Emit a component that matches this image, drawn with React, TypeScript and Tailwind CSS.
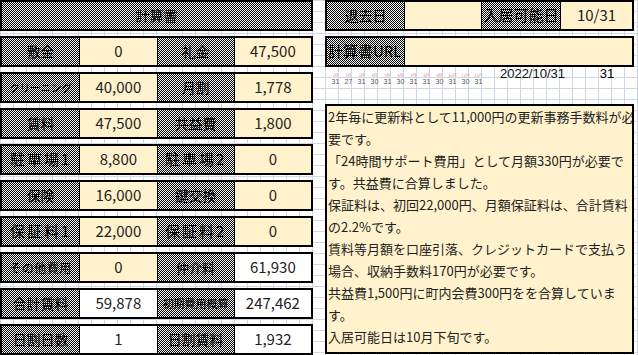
import React from 'react';

const HATCH =
  'bg-white bg-[image:repeating-conic-gradient(#000_0_25%,#fff_0_50%)] bg-[length:2px_2px]';
const CREAM = 'bg-[#fff2cc]';

type Cell = { label: string; lc?: string; value: string; white?: boolean };

const ROWS: [Cell, Cell][] = [
  [
    { label: '敷金', value: '0' },
    { label: '礼金', value: '47,500' },
  ],
  [
    { label: 'クリーニング', lc: 'text-[10.5px]', value: '40,000' },
    { label: '月割', value: '1,778' },
  ],
  [
    { label: '賃料', value: '47,500' },
    { label: '共益費', value: '1,800' },
  ],
  [
    { label: '駐車場1', lc: 'text-[15px] tracking-[2px]', value: '8,800' },
    { label: '駐車場2', lc: 'text-[15px] tracking-[2px]', value: '0' },
  ],
  [
    { label: '保険', value: '16,000' },
    { label: '鍵交換', value: '0' },
  ],
  [
    { label: '保証料1', lc: 'text-[15px] tracking-[2px]', value: '22,000' },
    { label: '保証料2', lc: 'text-[15px] tracking-[2px]', value: '0' },
  ],
  [
    { label: 'その他費用', lc: 'text-[12px] tracking-[0.5px]', value: '0' },
    { label: '仲介料', lc: 'text-[13px] text-[#1d3f9a]', value: '61,930', white: true },
  ],
  [
    { label: '合計賃料', value: '59,878', white: true },
    { label: '初期費用概算', lc: 'text-[11px]', value: '247,462', white: true },
  ],
  [
    { label: '日割日数', value: '1', white: true },
    { label: '日割賃料', value: '1,932', white: true },
  ],
];

const MONTHS = ['31', '27', '31', '30', '31', '30', '31', '31', '30', '31', '30', '31'];

const NOTES = [
  '2年毎に更新料として11,000円の更新事務手数料が必',
  '要です。',
  '「24時間サポート費用」として月額330円が必要で',
  'す。共益費に合算しました。',
  '保証料は、初回22,000円、月額保証料は、合計賃料',
  'の2.2%です。',
  '賃料等月額を口座引落、クレジットカードで支払う',
  '場合、収納手数料170円が必要です。',
  '共益費1,500円に町内会費300円をを合算していま',
  'す。',
  '入居可能日は10月下旬です。',
];

function Label({ text, cls = 'text-[14px]', first }: { text: string; cls?: string; first?: boolean }) {
  return (
    <div
      className={`${HATCH} flex items-center justify-center overflow-hidden whitespace-nowrap text-black ${
        first ? '' : 'border-l border-black'
      } ${cls}`}
    >
      {text}
    </div>
  );
}

function Value({ text, white }: { text: string; white?: boolean }) {
  return (
    <div
      className={`flex items-center justify-center border-l border-black text-[15px] text-[#222] ${
        white ? 'bg-white' : CREAM
      }`}
    >
      {text}
    </div>
  );
}

export default function App() {
  return (
    <div className="flex h-[355px] w-[638px] overflow-hidden bg-white bg-[image:linear-gradient(#d0d7e5_1px,transparent_1px),linear-gradient(90deg,#d0d7e5_1px,transparent_1px)] bg-[length:13px_11px] font-['Noto_Sans_CJK_JP',sans-serif]">
      {/* left: cost sheet */}
      <div className="flex w-[313px] flex-col gap-[5px]">
        <div className="flex h-[31px] border-2 border-black">
          <Label text="計算書" first cls="flex-1 text-[14px]" />
        </div>
        {ROWS.map(([a, b], i) => (
          <div key={i} className="grid h-[31px] grid-cols-4 border-2 border-black">
            <Label text={a.label} cls={a.lc} first />
            <Value text={a.value} white={a.white} />
            <Label text={b.label} cls={b.lc} />
            <Value text={b.value} white={b.white} />
          </div>
        ))}
      </div>

      {/* right: dates and notes */}
      <div className="ml-[12px] flex w-[309px] flex-col">
        <div className="grid h-[31px] grid-cols-[77px_77px_79px_1fr] border-2 border-black">
          <Label text="退去日" first />
          <div className={`border-l border-black ${CREAM}`} />
          <Label text="入居可能日" cls="text-[15px]" />
          <Value text="10/31" />
        </div>
        <div className="mt-[5px] grid h-[31px] grid-cols-[77px_1fr] border-2 border-black">
          <div className={`${HATCH} flex items-center whitespace-nowrap pl-[1px] text-[15px] text-black`}>
            計算書URL
          </div>
          <div className={`border-l border-black ${CREAM}`} />
        </div>
        <div className="flex h-[37px] items-start">
          <div className="ml-[4px] flex pt-[6px]">
            {MONTHS.map((d, i) => (
              <div key={i} className="flex w-[13px] flex-col items-center">
                <span className="text-[4px] leading-[5px] text-[#e08a8a]">{i + 1}月</span>
                <span className="font-['Liberation_Sans',sans-serif] text-[7px] leading-[7px] text-[#555]">
                  {d}
                </span>
              </div>
            ))}
          </div>
          <div className="w-[95px] text-center font-['Liberation_Sans',sans-serif] text-[13px] leading-[13px] text-[#111]">
            2022/10/31
          </div>
          <div className="flex-1 text-center font-['Liberation_Sans',sans-serif] text-[13px] leading-[13px] text-black">
            31
          </div>
        </div>
        <div className={`h-[250px] overflow-hidden border-2 border-black ${CREAM} pl-[1px] text-[13px] leading-[22px] text-[#222]`}>
          {NOTES.map((line, i) => (
            <div key={i} className="whitespace-nowrap">
              {line}
            </div>
          ))}
        </div>
      </div>
    </div>
  );
}
